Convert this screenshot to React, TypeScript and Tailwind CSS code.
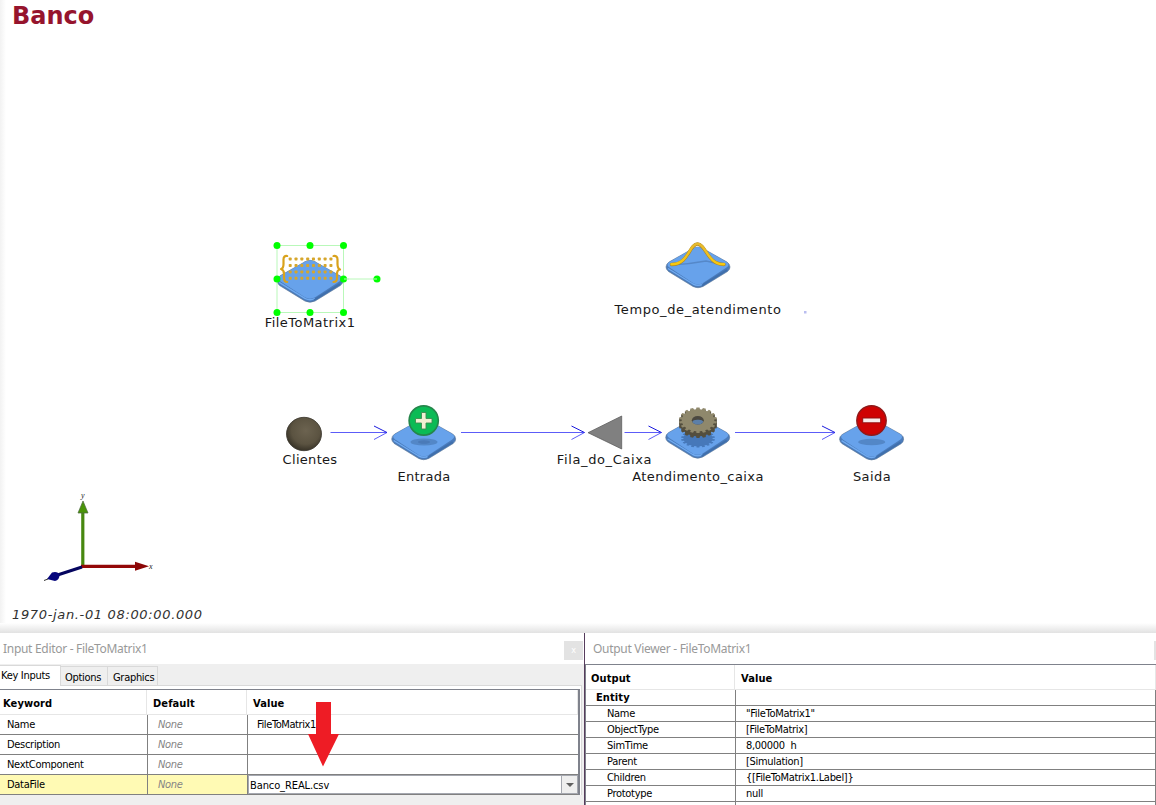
import type { ReactNode } from "react";

const inputRows = [
  { keyword: "Name", value: "FileToMatrix1" },
  { keyword: "Description", value: "" },
  { keyword: "NextComponent", value: "" },
];

const outputRows = [
  ["Name", "\"FileToMatrix1\""],
  ["ObjectType", "[FileToMatrix]"],
  ["SimTime", "8,00000  h"],
  ["Parent", "[Simulation]"],
  ["Children", "{[FileToMatrix1.Label]}"],
  ["Prototype", "null"],
  ["Clones", "{}"],
];

const handles = [
  [277, 245.5], [310, 245.5], [343.5, 245.5], [277, 279], [343.5, 279],
  [277, 312.5], [310, 312.5], [343.5, 312.5], [377, 279],
];

function Block({ x, y, scale = 1 }: { x: number; y: number; scale?: number }) {
  return (
    <g transform={`translate(${x} ${y}) scale(${scale})`}>
      <path d="M-4 -39.5Q0 -41.5 4 -39.5L29 -25.5Q32 -23.5 32 -20.5Q32 -18 29.500 -16L5 -1Q0 1.500 -5 -1L-29.500 -16Q-32 -18 -32 -20.500Q-32 -23.500 -29 -25.500Z" fill="#4a7bbb" stroke="#5b7594" strokeWidth=".6" />
      <path d="M-4 -39.500Q0 -41.500 4 -39.500L28.500 -25.500Q32.500 -23 28.500 -20L5 -4.500Q0 -1.800 -5 -4.500L-28.500 -20Q-32.500 -23 -28.500 -25.500Z" fill="#67a2eb" />
      <path d="M-30 -19L-5 -3.500Q0 -1 5 -3.500" fill="none" stroke="#6faaf0" strokeWidth="1.400" />
      <path d="M4 -2L29 -17.500" fill="none" stroke="#3f6fac" strokeWidth="1.800" />
    </g>
  );
}

function Connector({ from, to }: { from: number; to: number }) {
  return (
    <g fill="none" stroke="#5c5cf8" strokeWidth="1">
      <path d={`M${from} 432.5H${to}`} />
      <path d={`M${to - 13} 439.500L${to} 432.500`} />
      <path d={`M${to - 13} 426L${to} 432.500`} stroke="#1a1add" />
    </g>
  );
}

function gearPoints(teeth: number, rx: number, ry: number, cx: number, cy: number) {
  const pts: string[] = [];
  for (let i = 0; i < teeth; i++) {
    for (const [o, k] of [[-0.3, 0.86], [-0.24, 1], [0.24, 1], [0.3, 0.86]]) {
      const a = ((i + o) / teeth) * Math.PI * 2 + Math.PI / 2;
      pts.push(`${(cx + Math.cos(a) * rx * k).toFixed(2)},${(cy + Math.sin(a) * ry * k).toFixed(2)}`);
    }
  }
  return pts.join(" ");
}

function Diagram() {
  return (
    <svg className="absolute inset-0" width="1156" height="633" viewBox="0 0 1156 633">
      <defs>
        <radialGradient id="sphere" cx=".55" cy=".4" r=".62">
          <stop offset="0" stopColor="#6c6350" />
          <stop offset=".65" stopColor="#5b5341" />
          <stop offset="1" stopColor="#353025" />
        </radialGradient>
        <linearGradient id="bell" x1="0" x2="0" y1="0" y2="1">
          <stop offset="0" stopColor="#e6b92e" />
          <stop offset="1" stopColor="#f7c80e" />
        </linearGradient>
      </defs>

      <Block x={310} y={302} scale={1.03} />
      <g fill="#d6a62c">
        {[0, 1, 2, 3].flatMap((r) =>
          [0, 1, 2, 3, 4, 5, 6, 7].map((c) => (
            <rect key={`${r}-${c}`} x={288.700 + c * 5.820} y={257.500 + r * 6.450} width="3" height="3" rx=".8" />
          )),
        )}
      </g>
      <g fill="none" stroke="#d9a21b" strokeWidth="2.200" strokeLinecap="round" strokeLinejoin="round">
        <path d="M287.200 256Q283.500 255.500 283.500 259.500V264Q283.500 268.500 281 269Q284 270 284 274V278Q284 282 287.200 282" />
        <path d="M333.500 256Q337.500 255.500 337.500 259.500V264Q337.500 268.500 340 269.500Q337 270 337 274V278Q337 282 333.500 282" />
      </g>
      <path d="M277 245.500H343.500V312.500H277ZM343.500 279H377" fill="none" stroke="#b9f8b9" />
      {handles.map(([x, y]) => (
        <circle key={`${x}-${y}`} cx={x} cy={y} r="3.500" fill="#00ff00" />
      ))}
      <path d="M344 279H349M374 279H377" stroke="#b9f8b9" />

      <Block x={698} y={287.500} />
      <path d="M672 265Q690 264 706 261L720 264" fill="none" stroke="#5588c9" strokeWidth="1.300" />
      <path d="M671.500 264.500C689 264.500 689 244 697.500 244C706 244 707 264.500 724 264.500" fill="none" stroke="#a8842a" strokeWidth="3.300" strokeLinecap="round" />
      <path d="M671.500 264.300C689 264.300 689 243.800 697.500 243.800C706 243.800 707 264.300 724 264.300" fill="none" stroke="url(#bell)" strokeWidth="2.400" strokeLinecap="round" />
      <rect x="804" y="311" width="2.500" height="2.500" fill="#b9bdf0" />

      <Connector from={330.500} to={387} />
      <Connector from={461} to={584.500} />
      <Connector from={624.500} to={661.500} />
      <Connector from={735} to={835} />

      <ellipse cx="304" cy="434" rx="17.500" ry="16.700" fill="url(#sphere)" stroke="#39352c" strokeWidth=".8" />

      <Block x={423.700} y={459.500} />
      <ellipse cx="424" cy="442" rx="13.500" ry="3.600" fill="#5387c7" />
      <ellipse cx="424" cy="442" rx="6" ry="1.800" fill="#4a7ab8" />
      <circle cx="423.700" cy="420.500" r="14.600" fill="#0bbb55" stroke="#25864b" strokeWidth="1.600" />
      <path d="M421.500 412.500H426V418.500H432V423H426V429H421.500V423H415.500V418.500H421.500Z" fill="#f1efd2" stroke="#3b8d50" strokeWidth=".9" />

      <path d="M588 432.700L621.700 416V449Z" fill="#808080" stroke="#555" strokeWidth=".7" />

      <Block x={697.700} y={458} />
      <polygon points={gearPoints(18, 17, 9, 698, 438.500)} fill="#4678b9" />
      {[5, 4, 3, 2, 1].map((d) => (
        <polygon key={d} points={gearPoints(18, 19, 12.800, 698, 420.300 + d)} fill="#544f3f" />
      ))}
      <polygon points={gearPoints(18, 19, 12.800, 698, 420.300)} fill="#8f886c" />
      <ellipse cx="697.800" cy="420.300" rx="6" ry="4.300" fill="#4b4840" />
      <path d="M692.300 421.800Q693 419.600 698 419.800Q702.500 419.600 703.300 421.800Q702 424.600 698 424.600Q693.500 424.600 692.300 421.800Z" fill="#5c7fa8" />

      <Block x={871.600} y={459.700} />
      <ellipse cx="871.700" cy="442" rx="13.500" ry="3.300" fill="#5387c7" />
      <circle cx="871.500" cy="420.500" r="14.700" fill="#cf0303" stroke="#8e1a1a" strokeWidth="1.400" />
      <rect x="862.700" y="418" width="18" height="4.800" fill="#f8ecea" stroke="#941010" />

      <path d="M82.800 566V512" stroke="#47880f" strokeWidth="3.200" />
      <path d="M83 501L88 513H78Z" fill="#4a9408" stroke="#4c6940" strokeWidth=".7" />
      <path d="M81 566.300H136" stroke="#930808" strokeWidth="3.200" />
      <path d="M149 566.300L135 561.800V570.800Z" fill="#8c0606" />
      <path d="M82 567L56 575.500" stroke="#05055f" strokeWidth="3" />
      <path d="M47 579L52 572.500Q58 571 59.500 575Q59.500 580 55 581Z" fill="#05057c" />
      <path d="M44 580.500L48 579" stroke="#333" />
    </svg>
  );
}

function NodeLabel({ className, children }: { className: string; children: ReactNode }) {
  return (
    <div className={`absolute -translate-x-1/2 whitespace-nowrap text-[13px] leading-4 text-[#181818] ${className}`}>
      {children}
    </div>
  );
}

function ModelView() {
  return (
    <div className="relative h-[633px] shrink-0 overflow-hidden bg-white font-['DejaVu_Sans',sans-serif]">
      <div className="absolute inset-y-0 left-0 w-1.5 bg-gradient-to-r from-[#f2f2f2] to-white" />
      <div className="absolute inset-x-0 bottom-0 h-[10px] bg-gradient-to-b from-white to-[#e2e2e2]" />
      <Diagram />
      <h1 className="absolute left-[12px] top-px text-[24px] leading-[30px] font-bold text-[#96142d]">Banco</h1>
      <NodeLabel className="left-[310px] top-[315px] tracking-[0.47px]">FileToMatrix1</NodeLabel>
      <NodeLabel className="left-[698px] top-[302px] tracking-[0.6px]">Tempo_de_atendimento</NodeLabel>
      <NodeLabel className="left-[310px] top-[452px] tracking-[0.3px]">Clientes</NodeLabel>
      <NodeLabel className="left-[424px] top-[469px] tracking-[0.3px]">Entrada</NodeLabel>
      <NodeLabel className="left-[604.5px] top-[452px] tracking-[0.63px]">Fila_do_Caixa</NodeLabel>
      <NodeLabel className="left-[698px] top-[469px] tracking-[0.4px]">Atendimento_caixa</NodeLabel>
      <NodeLabel className="left-[872px] top-[469px] tracking-[0.4px]">Saida</NodeLabel>
      <span className="absolute left-[81px] top-[491px] font-['Liberation_Serif',serif] text-[8px] leading-[10px] italic text-[#222]">y</span>
      <span className="absolute left-[149px] top-[562px] font-['Liberation_Serif',serif] text-[8px] leading-[10px] italic text-[#222]">x</span>
      <div className="absolute left-[12px] top-[607px] whitespace-nowrap text-[13px] leading-4 tracking-[0.65px] italic text-[#303030]">
        1970-jan.-01 08:00:00.000
      </div>
    </div>
  );
}

function InputEditor() {
  return (
    <section className="relative flex w-[584px] shrink-0 flex-col bg-[#efefef]">
      <div className="flex h-[31px] shrink-0 items-center justify-between bg-white pr-px pl-[3px]">
        <span className="font-['Noto_Sans',sans-serif] text-[12px] leading-4 text-[#999]">Input Editor - FileToMatrix1</span>
        <span className="mt-[4px] flex h-[19px] w-[19px] items-center justify-center bg-[#e3e3e3] text-[9px] text-white">x</span>
      </div>
      <div className="flex h-[21px] shrink-0 items-end">
        <div className="relative top-px h-[21px] w-[61px] border-t border-r border-[#d9d9d9] bg-white pt-[3px] pl-px leading-[14px]">Key Inputs</div>
        <div className="h-[19px] w-[47px] border-t border-r border-[#d9d9d9] pt-[4px] pl-1 leading-[14px]">Options</div>
        <div className="h-[19px] w-[50px] border-t border-r border-[#d9d9d9] pt-[4px] pl-[5px] leading-[14px]">Graphics</div>
      </div>
      <div className="w-[582px] border-t border-r border-[#d9d9d9] bg-white pt-[3px] pr-px">
        <div className="border-t border-r-2 border-[#7f828c] bg-white">
          <div className="flex h-[25px] items-center border-b border-[#e6e6e6] tracking-[0.1px] font-bold">
            <div className="h-full w-[147px] border-r border-[#e6e6e6] pl-[3px] leading-[27px]">Keyword</div>
            <div className="h-full w-[100px] border-r border-[#e6e6e6] pl-[6px] leading-[27px]">Default</div>
            <div className="h-full flex-1 border-r border-[#e6e6e6] pl-[6px] leading-[27px]">Value</div>
          </div>
          {inputRows.map((row) => (
            <div key={row.keyword} className="flex h-5 border-b border-[#808080] leading-[19px]">
              <div className="w-[148px] border-r border-[#808080] pl-[7px]">{row.keyword}</div>
              <div className="w-[100px] border-r border-[#808080] pl-[10px] text-[#858585] italic">None</div>
              <div className="flex-1 pl-[9px] tracking-[-0.4px]">{row.value}</div>
            </div>
          ))}
          <div className="flex h-5 border-b border-[#808080] bg-[#fffab4] leading-[19px]">
            <div className="w-[148px] border-r border-[#808080] pl-[7px]">DataFile</div>
            <div className="w-[100px] border-r border-[#808080] pl-[10px] text-[#858585] italic">None</div>
            <div className="flex flex-1 border border-[#a5a8b0] bg-white">
              <div className="flex-1 pl-px leading-[19px] tracking-[-0.1px]">Banco_REAL.csv</div>
              <div className="flex w-4 items-center justify-center border-l border-[#a5a8b0] bg-[#efefef]">
                <svg width="8" height="4" viewBox="0 0 8 4"><path d="M0 0H8L4 4Z" fill="#606060" /></svg>
              </div>
            </div>
          </div>
        </div>
      </div>
      <svg className="absolute left-[308px] top-[69px]" width="32" height="65" viewBox="0 0 32 65">
        <path d="M8 0H23V32H31L15 64.500L0 32H8Z" fill="#ee1c25" />
      </svg>
    </section>
  );
}

function OutputViewer() {
  return (
    <section className="flex min-w-0 flex-1 flex-col border-l border-[#563c5c] bg-white">
      <div className="flex h-[31px] shrink-0 items-center justify-between bg-white pl-[8px]">
        <span className="font-['Noto_Sans',sans-serif] text-[12px] leading-4 text-[#999]">Output Viewer - FileToMatrix1</span>
        <span className="mt-[4px] h-[19px] w-[2px] bg-[#e3e3e3]" />
      </div>
      <div className="border-t border-l border-[#7f828c]">
        <div className="flex h-[25px] border-b border-[#e6e6e6] leading-[27px] tracking-[0.1px] font-bold">
          <div className="w-[149px] border-r border-[#e6e6e6] pl-[5px]">Output</div>
          <div className="flex-1 border-r border-[#e6e6e6] pl-[6px]">Value</div>
        </div>
        <div className="flex h-4 border-r border-b border-[#808080] leading-[15px] tracking-[0.1px] font-bold">
          <div className="w-[150px] border-r border-[#808080] pl-[10px]">Entity</div>
        </div>
        {outputRows.map(([name, value]) => (
          <div key={name} className="flex h-4 border-r border-b border-[#808080] leading-[15px]">
            <div className="w-[150px] border-r border-[#808080] pl-[21px]">{name}</div>
            <div className="whitespace-pre pl-[10px]">{value}</div>
          </div>
        ))}
      </div>
    </section>
  );
}

export default function App() {
  return (
    <main className="flex h-[805px] w-[1156px] flex-col overflow-hidden bg-white">
      <ModelView />
      <div className="flex h-[172px] overflow-hidden whitespace-nowrap font-['DejaVu_Sans_Condensed','DejaVu_Sans',sans-serif] text-[11px] tracking-[-0.3px] text-black">
        <InputEditor />
        <OutputViewer />
      </div>
    </main>
  );
}
